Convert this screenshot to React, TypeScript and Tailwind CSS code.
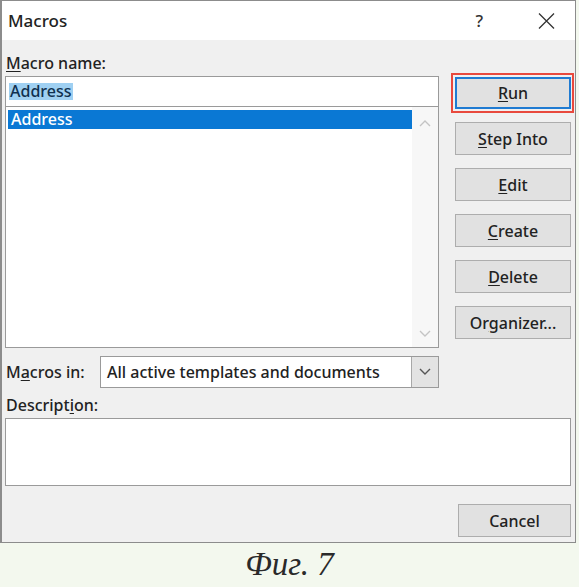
import React from "react";

const ui = { fontFamily: '"Noto Sans", "Open Sans", sans-serif' };

function Key({ text, at }: { text: string; at: number }) {
  return (
    <>
      {text.slice(0, at)}
      <span className="underline underline-offset-2">{text[at]}</span>
      {text.slice(at + 1)}
    </>
  );
}

function Btn({ label, at, focused }: { label: string; at: number; focused?: boolean }) {
  return (
    <div className="relative">
      <div
        className={
          "flex w-[116px] items-center justify-center bg-[#e1e1e1] text-[16px] font-medium text-[#222] " +
          (focused ? "h-[32px] border-2 border-[#1f7bd2]" : "h-[33px] border border-[#adadad]")
        }
      >
        <span>
          <Key text={label} at={at} />
        </span>
      </div>
      {focused && <div className="absolute -top-[4px] -bottom-[4px] -left-[4px] -right-[3px] border-2 border-[#e8493d]" />}
    </div>
  );
}

function Chevron({ up, color }: { up?: boolean; color: string }) {
  return (
    <svg width="12" height="8" viewBox="0 0 12 8" fill="none">
      <path d={up ? "M1 7 L6 2 L11 7" : "M1 1 L6 6 L11 1"} stroke={color} strokeWidth="1.4" />
    </svg>
  );
}

export default function App() {
  return (
    <div className="h-[587px] w-[579px] bg-[#f3f8ee]" style={ui}>
      <div className="flex h-[543px] w-[576px] flex-col border border-l-2 border-[#8c8c8c] bg-[#f0f0f0]">
        {/* title bar */}
        <div className="flex h-[39px] items-center bg-white pl-[6px] pr-[20px]">
          <span className="text-[17px] font-medium text-[#222]">Macros</span>
          <span className="ml-auto mr-[55px] text-[17px] font-medium text-[#333]">?</span>
          <svg width="17" height="16" viewBox="0 0 17 16">
            <path d="M1 0.5 L16 15.5 M16 0.5 L1 15.5" stroke="#333" strokeWidth="1.3" />
          </svg>
        </div>

        <div className="flex flex-1 flex-col pl-[3px] pr-[3px] text-[16px] font-medium text-[#222]">
          <div className="flex">
            {/* left column */}
            <div className="flex w-[434px] flex-col">
              <div className="mt-[13px] h-[20px] pl-[1px] leading-[20px]">
                <Key text="Macro name:" at={0} />
              </div>
              <div className="mt-[3px] flex h-[31px] items-center border border-[#9a9a9a] bg-white pl-[3px]">
                <span className="bg-[#9fd0f2] px-[1px] leading-[17px] text-[#10304f]">Address</span>
              </div>
              <div className="flex h-[241px] border border-t-0 border-[#9a9a9a] bg-white">
                <div className="flex-1 pl-[2px] pt-[3px]">
                  <div className="h-[19px] bg-[#0a78d4] pl-[3px] leading-[19px] text-white">Address</div>
                </div>
                <div className="flex w-[26px] flex-col items-center justify-between bg-[#f7f7f7] pt-[12px] pb-[9px]">
                  <Chevron up color="#c4c4c4" />
                  <Chevron color="#c4c4c4" />
                </div>
              </div>
              <div className="mt-[8px] flex h-[32px] items-center">
                <div className="w-[95px] pl-[1px]">
                  <Key text="Macros in:" at={1} />
                </div>
                <div className="flex h-[32px] flex-1 border border-[#9a9a9a] bg-white">
                  <div className="flex flex-1 items-center pl-[6px] whitespace-nowrap">
                    All active templates and documents
                  </div>
                  <div className="flex w-[27px] items-center justify-center border-l border-[#a8a8a8] bg-[#e3e3e3]">
                    <Chevron color="#555" />
                  </div>
                </div>
              </div>
            </div>

            {/* right column */}
            <div className="ml-[16px] flex flex-col gap-[13px] pt-[37px]">
              <Btn label="Run" at={0} focused />
              <Btn label="Step Into" at={0} />
              <Btn label="Edit" at={0} />
              <Btn label="Create" at={0} />
              <Btn label="Delete" at={0} />
              <Btn label="Organizer..." at={2} />
            </div>
          </div>

          <div className="mt-[7px] h-[20px] pl-[1px] leading-[20px]">
            <Key text="Description:" at={8} />
          </div>
          <div className="mt-[3px] mr-[1px] h-[68px] border border-[#9a9a9a] bg-white" />

          <div className="mt-[18px] flex justify-end pr-[1px]">
            <div className="flex h-[33px] w-[113px] items-center justify-center border border-[#adadad] bg-[#e1e1e1]">
              Cancel
            </div>
          </div>
        </div>
      </div>

      <div
        className="flex h-[44px] items-center justify-center text-[33px] italic text-[#2a2a2a]"
        style={{ fontFamily: '"Liberation Serif", serif' }}
      >
        Фиг. 7
      </div>
    </div>
  );
}
